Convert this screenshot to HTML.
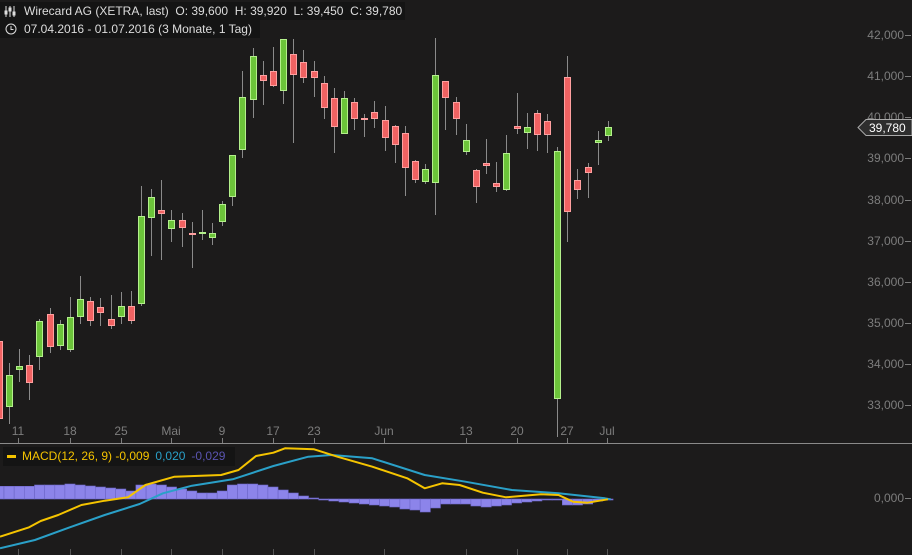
<!DOCTYPE html>
<html><head><meta charset="utf-8"><style>
body{margin:0;background:#1c1b1b;width:912px;height:555px;overflow:hidden;font-family:"Liberation Sans",sans-serif}
svg{position:absolute;left:0;top:0}
.hd{position:absolute;left:0;background:#141414;color:#ddd;font-size:12px;line-height:18px;padding:0 0 0 24px;white-space:pre}
</style></head><body>
<svg id="s" width="912" height="555" xmlns="http://www.w3.org/2000/svg"></svg>
<div class="hd" style="top:2px;width:381px">Wirecard AG (XETRA, last)  O: 39,600  H: 39,920  L: 39,450  C: 39,780</div>
<div class="hd" style="top:20px;width:236px">07.04.2016 - 01.07.2016 (3 Monate, 1 Tag)</div>
<svg width="20" height="40" style="position:absolute;left:4px;top:2px">
<g stroke="#ddd" stroke-width="1" fill="none">
<line x1="2" y1="4" x2="2" y2="15"/><rect x="1" y="9" width="2" height="3"/>
<line x1="6" y1="4" x2="6" y2="15"/><rect x="5" y="6" width="2" height="3"/>
<line x1="10" y1="4" x2="10" y2="15"/><rect x="9" y="10" width="2" height="3"/>
<circle cx="7" cy="27" r="5"/><path d="M7 24v3.5h2.5"/></g></svg>
<script>
var s=document.getElementById('s'),h='';
var P=[[42,35],[41,76],[40,117],[39,158],[38,200],[37,241],[36,282],[35,323],[34,364],[33,405]];
P.forEach(function(p){h+='<text x="904" y="'+(p[1]+4)+'" fill="#7d7d7d" font-size="12" text-anchor="end" font-family="Liberation Sans">'+p[0]+',000</text><line x1="905" y1="'+(p[1]+.5)+'" x2="911" y2="'+(p[1]+.5)+'" stroke="#7d7d7d"/>';});
var C=[['r',341,418,310,433],['g',375,406,363,424],['g',366,369,349,382],['r',365,382,355,400],['g',321,356,319,370],['r',314,346,308,353],['g',324,345,320,350],['g',317,349,297,352],['g',299,316,276,324],['r',301,320,297,326],['r',307,312,298,326],['r',319,325,295,329],['g',306,316,292,324],['r',306,320,291,324],['g',216,303,186,306],['g',197,217,189,256],['r',210,213,180,260],['g',220,228,210,242],['r',220,227,213,247],['r',233,234,222,268],['g',232,233,210,240],['g',233,237,223,245],['g',204,221,201,226],['g',155,196,155,206],['g',97,149,71,158],['g',56,99,48,118],['r',75,80,61,105],['r',71,85,47,87],['g',39,90,39,104],['r',54,74,39,143],['r',62,77,50,83],['r',71,77,61,97],['r',83,107,76,119],['r',98,126,88,153],['g',98,133,91,133],['r',102,118,98,130],['r',118,119,114,137],['r',112,118,101,128],['r',120,137,106,151],['r',126,144,125,163],['r',133,167,126,196],['r',161,179,160,183],['g',169,181,164,184],['g',75,182,38,215],['r',81,97,81,130],['r',102,118,97,135],['g',140,151,124,155],['r',170,186,169,203],['r',163,165,139,174],['r',183,186,162,192],['g',153,189,135,191],['r',126,128,93,134],['g',127,132,113,149],['r',113,134,110,151],['r',121,134,114,153],['g',151,398,147,437],['r',77,211,56,242],['r',180,189,169,199],['r',167,172,163,198],['g',140,142,131,165],['g',127,135,121,141]];
function cx(i){return -1.15+10.15*i;}
C.forEach(function(c,i){var x=Math.round(cx(i));
h+='<line x1="'+(x+.5)+'" y1="'+c[3]+'" x2="'+(x+.5)+'" y2="'+c[4]+'" stroke="#8a8a8a"/>';
var f=c[0]=='g'?'#6cc43a':'#f06262',st=c[0]=='g'?'#b4f08c':'#ffa0a0';
var ht=Math.max(c[2]-c[1],1);
h+='<rect x="'+(x-2.5)+'" y="'+(c[1]+.5)+'" width="6" height="'+ht+'" fill="'+f+'" stroke="'+st+'"/>';});
h+='<line x1="0" y1="443.5" x2="912" y2="443.5" stroke="#8a8a8a"/>';
var X=[['11',18],['18',70],['25',121],['Mai',171],['9',222],['17',273],['23',314],['Jun',384],['13',466],['20',517],['27',567],['Jul',607]];
X.forEach(function(t){h+='<text x="'+t[1]+'" y="435" fill="#7d7d7d" font-size="12" text-anchor="middle" font-family="Liberation Sans">'+t[0]+'</text><line x1="'+(t[1]+.5)+'" y1="438" x2="'+(t[1]+.5)+'" y2="443" stroke="#7d7d7d"/><line x1="'+(t[1]+.5)+'" y1="549" x2="'+(t[1]+.5)+'" y2="555" stroke="#555"/>';});
var H=[12.7,12.7,12.7,12.7,14,14,14,15,14,13,12,11,10,8,14,15,14,12,10,8,6,6,8,14,15,15,14,12,9,6,3,1,-1,-2,-3,-4,-5,-6,-7,-8,-10,-11,-13,-9,-5,-5,-5,-7,-8,-7,-6,-4,-3,-2,-1,-1,-6,-6,-5,-2,-1];
var B=499;
H.forEach(function(v,i){var x=cx(i)-5,y=v>0?B-v:B;h+='<rect x="'+x.toFixed(1)+'" y="'+y+'" width="10.15" height="'+Math.abs(v)+'" fill="#8c84ea" stroke="#6d66c8" stroke-width=".6"/>';});
function pl(a,col){var d='';a.forEach(function(p,i){d+=(i?'L':'M')+(p[0]/1.719).toFixed(1)+' '+(440+p[1]/3).toFixed(1);});return '<path d="'+d+'" fill="none" stroke="'+col+'" stroke-width="2" stroke-linejoin="round"/>';}
h+=pl([[0,325],[60,300],[120,262],[180,225],[240,192],[280,160],[330,137],[400,118],[470,78],[530,50],[570,45],[640,55],[730,105],[800,125],[880,150],[960,160],[1040,175],[1050,178]],'#2aa0c8');
h+=pl([[0,290],[50,262],[70,243],[100,225],[140,195],[180,182],[220,172],[250,135],[300,110],[380,105],[410,90],[440,48],[470,38],[490,25],[540,28],[580,50],[640,80],[700,115],[730,145],[760,130],[790,135],[830,158],[870,172],[930,163],[960,165],[985,185],[1010,188],[1045,178]],'#f5c400');
h+='<text x="904" y="502" fill="#7d7d7d" font-size="12" text-anchor="end" font-family="Liberation Sans">0,000</text><line x1="905" y1="498.5" x2="911" y2="498.5" stroke="#7d7d7d"/>';
h+='<rect x="3" y="447" width="232" height="19" fill="#141414"/><rect x="7" y="455" width="9" height="3" fill="#f5c400"/>';
h+='<text y="460" font-size="12" font-family="Liberation Sans"><tspan x="22" fill="#f5c400">MACD(12, 26, 9)  -0,009</tspan><tspan dx="6" fill="#2aa0c8">0,020</tspan><tspan dx="6" fill="#5a54b0">-0,029</tspan></text>';
h+='<path d="M858 127.5L866 119.5H912V135.5H866Z" fill="#2e2e2e" stroke="#aaa"/><text x="869" y="132" fill="#fff" font-size="12" font-family="Liberation Sans">39,780</text>';
s.innerHTML=h;
</script>
</body></html>
